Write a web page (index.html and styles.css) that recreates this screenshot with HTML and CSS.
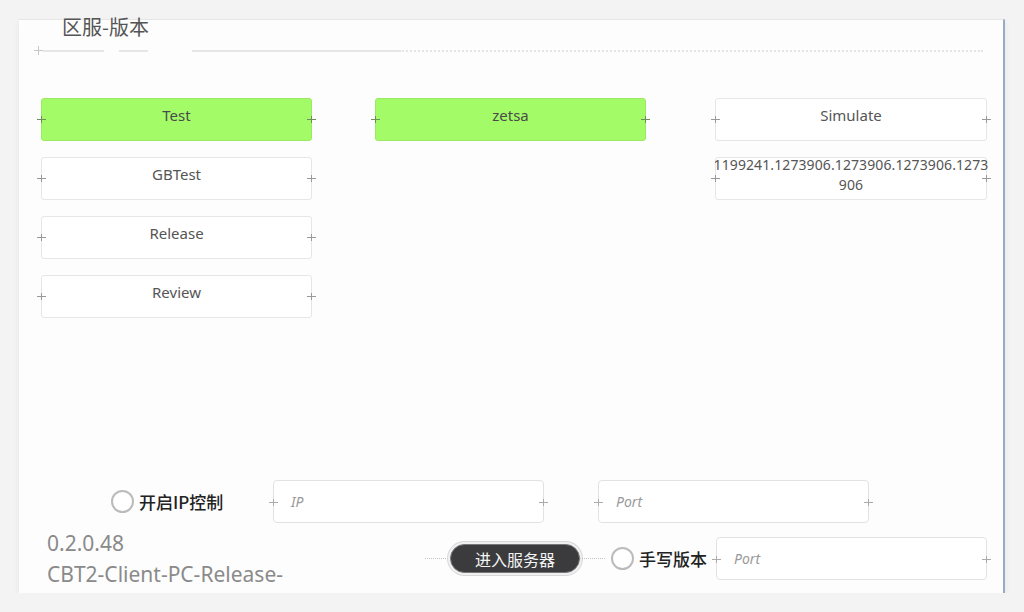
FILE: index.html
```html
<!DOCTYPE html>
<html lang="zh-CN">
<head>
    <meta charset="UTF-8">
    <meta name="viewport" content="width=device-width, initial-scale=1.0">
    <link rel="stylesheet" href="styles.css">
    <title>区服-版本</title>
</head>
<body>

    <div class="panel">
        <!-- Заголовок -->
        <div class="title">区服-版本</div>
        <div class="divider">
            <span class="star"></span>
            <span class="seg seg1"></span>
            <span class="seg seg2"></span>
            <span class="seg seg3"></span>
            <span class="seg dots"></span>
        </div>

        <!-- Кнопки серверов -->
        <div class="servers">
            <div class="col col1">
                <div class="srv active">Test</div>
                <div class="srv">GBTest</div>
                <div class="srv">Release</div>
                <div class="srv">Review</div>
            </div>
            <div class="col col2">
                <div class="srv active">zetsa</div>
            </div>
            <div class="col col3">
                <div class="srv">Simulate</div>
                <div class="srv long"><span class="long-text">1199241.1273906.1273906.1273906.1273906</span></div>
            </div>
        </div>

        <!-- Нижняя часть -->
        <div class="bottom">
            <div class="row row-ip">
                <label class="check check-ip"><span class="radio"></span>开启IP控制</label>
                <div class="field">IP</div>
                <div class="field field-port">Port</div>
            </div>
            <div class="row row-enter">
                <div class="version">
                    <div>0.2.0.48</div>
                    <div>CBT2-Client-PC-Release-</div>
                </div>
                <div class="enter-wrap">
                    <button class="enter">进入服务器</button>
                </div>
                <label class="check check-hand"><span class="radio"></span>手写版本</label>
                <div class="field">Port</div>
            </div>
        </div>
    </div>

</body>
</html>
```

FILE: styles.css
```css
        body {
            margin: 0;
            background-color: #f3f3f3;
            font-family: "Noto Sans", "Noto Sans CJK SC", sans-serif;
        }

        /* Основная панель */
        .panel {
            width: 986px;
            height: 574px;
            margin: 19px 0 0 19px;
            background-color: #fdfdfd;
            border-top: 1px solid #e6e6e6;
            border-right: 2px solid #9aaac4;
            box-shadow: 0 3px 6px rgba(0, 0, 0, 0.06);
            box-sizing: border-box;
            display: flex;
            flex-direction: column;
        }

        .title {
            margin: -5px 0 0 43px;
            font-family: "Noto Sans CJK SC", sans-serif;
            font-size: 20px;
            line-height: 24px;
            color: #555;
        }

        .divider {
            display: flex;
            align-items: center;
            margin: 7px 0 0 15px;
            height: 9px;
        }

        .star {
            width: 9px;
            height: 9px;
            background:
                linear-gradient(#c8c8c8, #c8c8c8) center / 9px 1px no-repeat,
                linear-gradient(#c8c8c8, #c8c8c8) center / 1px 9px no-repeat;
        }

        .seg {
            height: 2px;
            background-color: #e6e6e6;
        }

        .seg1 { width: 61px; }
        .seg2 { width: 29px; margin-left: 15px; }
        .seg3 { width: 207px; margin-left: 44px; }

        .dots {
            flex: 1;
            margin-right: 20px;
            height: 0;
            border-top: 2px dotted #e4e4e4;
            background: none;
        }

        /* Сетка кнопок */
        .servers {
            display: flex;
            margin-top: 43px;
        }

        .col {
            display: flex;
            flex-direction: column;
            gap: 16px;
            width: 271px;
        }

        .col1 { margin-left: 22px; }
        .col2 { margin-left: 63px; }
        .col3 { margin-left: 69px; width: 272px; }

        .srv {
            height: 43px;
            border: 1px solid #e6e6e6;
            border-radius: 3px;
            background-color: #fff;
            box-sizing: border-box;
            display: flex;
            align-items: center;
            justify-content: center;
            padding-bottom: 10px;
            font-size: 15px;
            color: #555;
            position: relative;
        }

        .srv::before,
        .srv::after {
            content: "";
            position: absolute;
            top: 17px;
            width: 9px;
            height: 7px;
            background:
                linear-gradient(#999, #999) center / 9px 1px no-repeat,
                linear-gradient(#999, #999) center / 1px 7px no-repeat;
        }

        .srv::before { left: -5px; }
        .srv::after { right: -5px; }

        .srv.active {
            background-color: #a4fb68;
            border-color: #9be861;
            color: #4a4a4a;
        }

        .srv.active::before,
        .srv.active::after {
            background:
                linear-gradient(#6f8f5a, #6f8f5a) center / 9px 1px no-repeat,
                linear-gradient(#6f8f5a, #6f8f5a) center / 1px 7px no-repeat;
        }

        .srv.long {
            padding: 0 0 8px;
        }

        .long-text {
            flex-shrink: 0;
            width: calc(100% + 8px);
            font-size: 14px;
            line-height: 20px;
            letter-spacing: 0.1px;
            text-align: center;
            word-break: break-all;
        }

        /* Нижние ряды */
        .bottom {
            margin-top: auto;
            padding-bottom: 13px;
        }

        .row {
            display: flex;
            align-items: center;
            height: 43px;
        }

        .row-enter {
            margin-top: 14px;
        }

        .check {
            display: flex;
            align-items: center;
            gap: 5px;
            font-family: "Noto Sans CJK SC", sans-serif;
            font-size: 17px;
            font-weight: 500;
            color: #222;
        }

        .check-ip {
            width: 162px;
            margin-left: 92px;
        }

        .check-hand {
            margin-left: 6px;
            width: 105px;
        }

        .radio {
            width: 23px;
            height: 23px;
            border: 2px solid #bbb;
            border-radius: 50%;
            box-sizing: border-box;
            background-color: #fff;
        }

        .field {
            width: 271px;
            height: 43px;
            border: 1px solid #e2e2e2;
            border-radius: 4px;
            background-color: #fff;
            box-sizing: border-box;
            display: flex;
            align-items: center;
            padding-left: 17px;
            font-size: 14px;
            font-style: italic;
            color: #999;
            position: relative;
        }

        .field::before,
        .field::after {
            content: "";
            position: absolute;
            top: 18px;
            width: 9px;
            height: 7px;
            background:
                linear-gradient(#aaa, #aaa) center / 9px 1px no-repeat,
                linear-gradient(#aaa, #aaa) center / 1px 7px no-repeat;
        }

        .field::before { left: -5px; }
        .field::after { right: -5px; }

        .field-port {
            margin-left: 54px;
        }

        .version {
            width: 378px;
            margin-left: 28px;
            font-size: 21px;
            line-height: 31px;
            color: #8a8a8a;
            white-space: nowrap;
        }

        .enter-wrap {
            width: 180px;
            display: flex;
            justify-content: center;
            align-items: center;
            position: relative;
        }

        .enter-wrap::before,
        .enter-wrap::after {
            content: "";
            flex: 1;
            border-top: 1px dotted #c4c4c4;
        }

        .enter {
            width: 130px;
            height: 29px;
            border: 1px solid #777;
            border-radius: 15px;
            background-color: #3b3b3d;
            box-shadow: 0 0 0 2px #f0f0f0, 0 0 0 3px #d8d8d8;
            color: #f4f4f4;
            font-family: "Noto Sans CJK SC", sans-serif;
            font-size: 16px;
            padding: 0;
        }
```
